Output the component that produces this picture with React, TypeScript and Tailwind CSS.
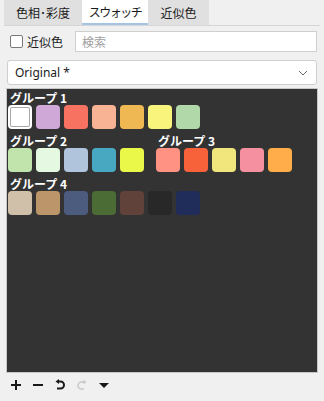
import React from 'react';

/* ── Swatch panel ───────────────────────────────────────── */

const jp = "font-['Noto_Sans_CJK_JP','Noto_Sans',sans-serif]";

const groups: { name: string; colors: string[] }[] = [
  { name: 'グループ 1', colors: ['#ffffff', '#d0a8d8', '#f87262', '#f8b294', '#f0b852', '#f8f47c', '#b0d8a8'] },
  { name: 'グループ 2', colors: ['#c0e4ac', '#e4f8e2', '#b0c4dc', '#48a8c2', '#eaf84a'] },
  { name: 'グループ 3', colors: ['#ff9282', '#f8623a', '#f0e67c', '#f490a0', '#ffac4a'] },
  { name: 'グループ 4', colors: ['#d0c0aa', '#bc966a', '#4c5c7e', '#4c6c36', '#60423a', '#282828', '#202c5a'] },
];

function Swatch({ color, selected }: { color: string; selected?: boolean }) {
  if (selected) {
    return (
      <div className="w-[24px] h-[24px] rounded-[4px] bg-white p-[2px]">
        <div className="w-full h-full rounded-[2px] border border-[#a8a8a8] bg-white" />
      </div>
    );
  }
  return <div className="w-[24px] h-[24px] rounded-[4px]" style={{ backgroundColor: color }} />;
}

function Group({ name, colors, first }: { name: string; colors: string[]; first?: boolean }) {
  return (
    <div className="flex flex-col">
      <div className={`${jp} h-[14px] leading-[14px] text-[12px] font-bold text-white pl-[2px]`}>{name}</div>
      <div className="flex gap-[4px]">
        {colors.map((c, i) => (
          <Swatch key={c} color={c} selected={first && i === 0} />
        ))}
      </div>
    </div>
  );
}

export default function App() {
  return (
    <div className="w-[324px] h-[401px] bg-[#f0f0f0] flex flex-col overflow-hidden">
      {/* Tabs */}
      <div className={`${jp} mx-[4px] flex h-[26px] border-b border-[#d6d6d6] text-[12px] text-[#1a1a1a]`}>
        <div className="w-[78px] bg-[#e0e0e0] flex items-center justify-center">色相･彩度</div>
        <div className="w-[66px] bg-white flex items-center justify-center border-b-2 border-[#a4c4e4] tracking-[-1.5px]">スウォッチ</div>
        <div className="w-[61px] bg-[#e0e0e0] flex items-center justify-center">近似色</div>
      </div>

      {/* Search row */}
      <div className="flex items-center mt-[5px] pl-[10px] pr-[7px] h-[21px]">
        <div className="w-[13px] h-[13px] border border-[#7a7a7a] rounded-[2px] bg-white" />
        <span className={`${jp} ml-[4px] text-[12px] text-[#1a1a1a]`}>近似色</span>
        <div className="ml-[12px] flex-1 h-[21px] border border-[#cfcfcf] bg-white flex items-center pl-[6px]">
          <span className={`${jp} text-[12px] text-[#a0a0a0]`}>検索</span>
        </div>
      </div>

      {/* Dropdown */}
      <div className="mx-[7px] mt-[8px] h-[25px] border border-[#cfcfcf] rounded-[3px] bg-white flex items-center justify-between pl-[7px] pr-[8px]">
        <span className="font-['Noto_Sans',sans-serif] text-[12px] text-[#1a1a1a]">Original *</span>
        <svg width="10" height="6" viewBox="0 0 10 6" fill="none">
          <path d="M1 1l4 4 4-4" stroke="#666" strokeWidth="1" />
        </svg>
      </div>

      {/* Swatch canvas */}
      <div className="mx-[6px] mt-[3px] h-[285px] border border-[#c8c8c8] bg-[#333333] pt-[2px] pl-[1px] flex flex-col gap-[5px]">
        <Group name={groups[0].name} colors={groups[0].colors} first />
        <div className="flex gap-[12px]">
          <Group name={groups[1].name} colors={groups[1].colors} />
          <Group name={groups[2].name} colors={groups[2].colors} />
        </div>
        <Group name={groups[3].name} colors={groups[3].colors} />
      </div>

      {/* Toolbar */}
      <div className="flex items-center h-[22px] pl-[10px] gap-[10px] mt-[1px]">
        <svg width="12" height="12" viewBox="0 0 12 12">
          <path d="M6 1v10M1 6h10" stroke="#1a1a1a" strokeWidth="2" />
        </svg>
        <svg width="12" height="12" viewBox="0 0 12 12">
          <path d="M1 6h10" stroke="#1a1a1a" strokeWidth="2" />
        </svg>
        <svg width="12" height="12" viewBox="0 0 12 12">
          <path d="M4 2.5h2.5a3.5 3.5 0 0 1 0 7H3" stroke="#1a1a1a" strokeWidth="2" fill="none" />
          <path d="M1.5 2.5l3.5-2.5v5z" fill="#1a1a1a" />
        </svg>
        <svg width="12" height="12" viewBox="0 0 12 12">
          <path d="M8 3H5.5a3.5 3.5 0 0 0 0 7H8" stroke="#c8c8c8" strokeWidth="1.5" fill="none" />
          <path d="M10.5 3L7.5 0.8v4.4z" fill="#c8c8c8" />
        </svg>
        <svg width="12" height="12" viewBox="0 0 12 12">
          <path d="M1 4h10l-5 5z" fill="#1a1a1a" />
        </svg>
      </div>
    </div>
  );
}
